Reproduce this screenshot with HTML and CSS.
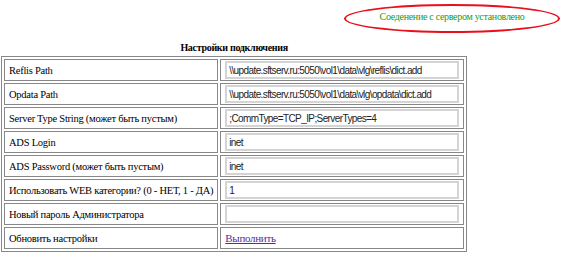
FILE: index.html
```html
<!DOCTYPE html>
<html lang="ru">
<head>
    <meta charset="UTF-8">
    <title>Настройки подключения</title>
    <link rel="stylesheet" href="styles.css">
</head>
<body>
    <div class="status-bar">
        <div class="status-oval">Соеденение с сервером установлено</div>
    </div>

    <table class="settings">
        <caption>Настройки подключения</caption>
        <tr>
            <td class="label">Reflis Path</td>
            <td><input type="text" value="\\update.sftserv.ru:5050\vol1\data\vlg\reflis\dict.add"></td>
        </tr>
        <tr>
            <td class="label">Opdata Path</td>
            <td><input type="text" value="\\update.sftserv.ru:5050\vol1\data\vlg\opdata\dict.add"></td>
        </tr>
        <tr>
            <td class="label">Server Type String (может быть пустым)</td>
            <td><input type="text" value=";CommType=TCP_IP;ServerTypes=4"></td>
        </tr>
        <tr>
            <td class="label">ADS Login</td>
            <td><input type="text" value="inet"></td>
        </tr>
        <tr>
            <td class="label">ADS Password (может быть пустым)</td>
            <td><input type="text" value="inet"></td>
        </tr>
        <tr>
            <td class="label">Использовать WEB категории? (0 - НЕТ, 1 - ДА)</td>
            <td><input type="text" value="1"></td>
        </tr>
        <tr>
            <td class="label">Новый пароль Администратора</td>
            <td><input type="password" value=""></td>
        </tr>
        <tr>
            <td class="label">Обновить настройки</td>
            <td><a href="#">Выполнить</a></td>
        </tr>
    </table>
</body>
</html>
```

FILE: styles.css
```css
body {
    margin: 0;
    padding: 4px 1px 0 1px;
    font-family: 'Liberation Serif', 'Times New Roman', serif;
    font-size: 11px;
    background-color: #fff;
    color: #000;
}

.status-bar {
    display: flex;
    justify-content: flex-end;
    height: 36px;
}

.status-oval {
    width: 216px;
    height: 29px;
    margin-right: 1px;
    border: 2px solid #e8101c;
    border-radius: 50%;
    color: #1a9a1a;
    font-size: 10px;
    letter-spacing: -0.3px;
    display: flex;
    align-items: center;
    justify-content: center;
    padding-bottom: 4px;
    box-sizing: border-box;
}

.settings {
    width: 463px;
    border: 1px solid #888;
    border-spacing: 2px;
    margin-top: 2px;
}

.settings caption {
    font-size: 10px;
    font-weight: bold;
    letter-spacing: -0.3px;
    padding-bottom: 3px;
}

.settings td {
    border: 1px solid #888;
    padding: 0 4px;
    height: 20px;
    white-space: nowrap;
}

.settings td.label {
    width: 198px;
    font-size: 10.5px;
    letter-spacing: -0.25px;
}

.settings input {
    display: block;
    width: 234px;
    box-sizing: border-box;
    height: 18px;
    padding: 1px 2px;
    border: 2px solid #d4d4d4;
    font-family: 'Liberation Sans', Arial, sans-serif;
    font-size: 10px;
    letter-spacing: -0.6px;
    color: #222;
}

.settings a {
    color: #5a2aa0;
    letter-spacing: -0.3px;
}
```
